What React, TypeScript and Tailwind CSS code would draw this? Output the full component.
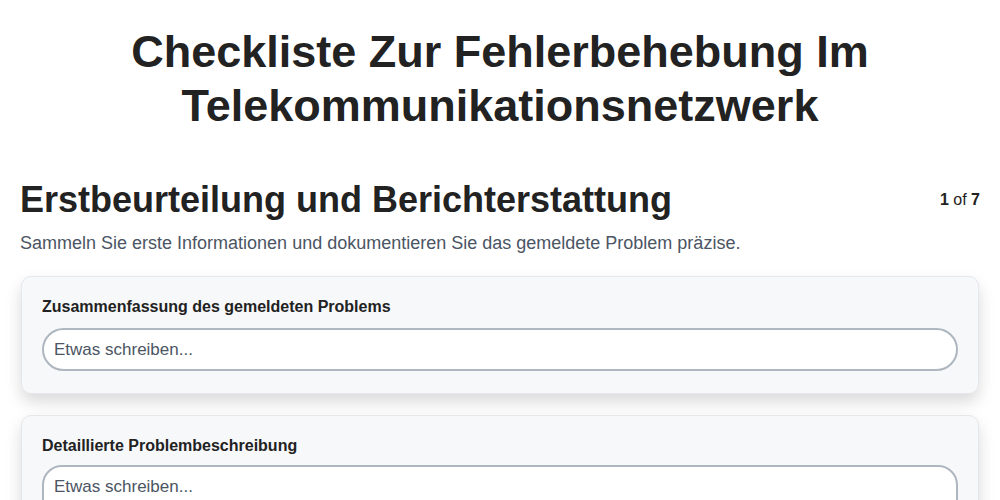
import React from 'react';

const fields = [
  { label: 'Zusammenfassung des gemeldeten Problems', multiline: false },
  { label: 'Detaillierte Problembeschreibung', multiline: true },
];

const App: React.FC = () => {
  return (
    <div className="min-h-screen bg-white text-[#222] font-['Liberation_Sans',Arial,sans-serif]">
      <div className="px-5 pt-[25px] pb-10">
        <h1 className="text-center text-[45px] leading-[54px] font-bold">
          Checkliste Zur Fehlerbehebung Im
          <br />
          Telekommunikationsnetzwerk
        </h1>

        <div className="mt-[47px] flex items-start justify-between">
          <h2 className="text-[36px] leading-[40px] font-bold">Erstbeurteilung und Berichterstattung</h2>
          <div className="pt-[8px] text-base">
            <span className="font-bold">1</span> of <span className="font-bold">7</span>
          </div>
        </div>
        <p className="mt-[9px] text-lg leading-7 text-[#4b5563]">
          Sammeln Sie erste Informationen und dokumentieren Sie das gemeldete Problem präzise.
        </p>

        <div className="mt-[19px] flex flex-col gap-[21px]">
          {fields.map((f) => (
            <div
              key={f.label}
              className="mx-px rounded-[10px] border border-[#e5e7eb] bg-[#f7f8fa] px-5 pt-[18px] pb-[22px] shadow-[0_8px_16px_rgba(0,0,0,0.15)]"
            >
              <label className={`block text-base leading-6 font-bold ${f.multiline ? 'mb-[7px]' : 'mb-[9px]'}`}>
                {f.label}
              </label>
              {f.multiline ? (
                <textarea
                  rows={4}
                  placeholder="Etwas schreiben..."
                  className="block w-full resize-none rounded-[20px] border-2 border-[#aeb6bf] bg-white px-[10px] pt-[7px] pb-2 text-[17px] text-[#222] placeholder:text-[#4b5563] outline-none"
                />
              ) : (
                <input
                  type="text"
                  placeholder="Etwas schreiben..."
                  className="block h-[43px] w-full rounded-full border-2 border-[#aeb6bf] bg-white px-[10px] text-[17px] text-[#222] placeholder:text-[#4b5563] outline-none"
                />
              )}
            </div>
          ))}
        </div>
      </div>
    </div>
  );
};

export default App;
